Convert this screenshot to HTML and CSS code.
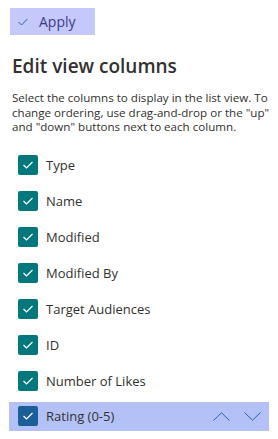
FILE: index.html
```html
<!DOCTYPE html>
<html>
<head>
<meta charset="utf-8">
<link rel="stylesheet" href="styles.css">
</head>
<body>
<div class="panel">
  <button class="apply">
    <svg class="apply-icon" width="10" height="8" viewBox="0 0 10 8"><path d="M0.5 4 L3.5 7 L9.5 0.8" fill="none" stroke="#2f5fb8" stroke-width="1"/></svg>
    <span>Apply</span>
  </button>
  <h1 class="title">Edit view columns</h1>
  <p class="desc">Select the columns to display in the list view. To change ordering, use drag-and-drop or the "up" and "down" buttons next to each column.</p>
  <ul class="cols">
    <li class="col"><span class="box"><svg width="12" height="10" viewBox="0 0 12 10"><path d="M1.5 5 L4.5 8 L10.5 2" fill="none" stroke="#fff" stroke-width="1.2"/></svg></span><span class="label">Type</span></li>
    <li class="col"><span class="box"><svg width="12" height="10" viewBox="0 0 12 10"><path d="M1.5 5 L4.5 8 L10.5 2" fill="none" stroke="#fff" stroke-width="1.2"/></svg></span><span class="label">Name</span></li>
    <li class="col"><span class="box"><svg width="12" height="10" viewBox="0 0 12 10"><path d="M1.5 5 L4.5 8 L10.5 2" fill="none" stroke="#fff" stroke-width="1.2"/></svg></span><span class="label">Modified</span></li>
    <li class="col"><span class="box"><svg width="12" height="10" viewBox="0 0 12 10"><path d="M1.5 5 L4.5 8 L10.5 2" fill="none" stroke="#fff" stroke-width="1.2"/></svg></span><span class="label">Modified By</span></li>
    <li class="col"><span class="box"><svg width="12" height="10" viewBox="0 0 12 10"><path d="M1.5 5 L4.5 8 L10.5 2" fill="none" stroke="#fff" stroke-width="1.2"/></svg></span><span class="label">Target Audiences</span></li>
    <li class="col"><span class="box"><svg width="12" height="10" viewBox="0 0 12 10"><path d="M1.5 5 L4.5 8 L10.5 2" fill="none" stroke="#fff" stroke-width="1.2"/></svg></span><span class="label">ID</span></li>
    <li class="col"><span class="box"><svg width="12" height="10" viewBox="0 0 12 10"><path d="M1.5 5 L4.5 8 L10.5 2" fill="none" stroke="#fff" stroke-width="1.2"/></svg></span><span class="label">Number of Likes</span></li>
    <li class="col col-active"><span class="box box-active"><svg width="12" height="10" viewBox="0 0 12 10"><path d="M1.5 5 L4.5 8 L10.5 2" fill="none" stroke="#fff" stroke-width="1.2"/></svg></span><span class="label">Rating (0-5)</span>
      <span class="arrows">
        <svg class="arrow" width="17" height="9" viewBox="0 0 17 9"><path d="M0.5 8.5 L8.5 0.8 L16.5 8.5" fill="none" stroke="#2f5fb8" stroke-width="1"/></svg>
        <svg class="arrow" width="17" height="9" viewBox="0 0 17 9"><path d="M0.5 0.5 L8.5 8.2 L16.5 0.5" fill="none" stroke="#2f5fb8" stroke-width="1"/></svg>
      </span>
    </li>
  </ul>
</div>
</body>
</html>
```

FILE: styles.css
```css
html, body {
  margin: 0;
  padding: 0;
  background: #fff;
}
.panel {
  width: 278px;
  height: 439px;
  overflow: hidden;
  font-family: "Segoe UI", "Open Sans", "Noto Sans", sans-serif;
  color: #323130;
}
.apply {
  display: flex;
  align-items: center;
  margin: 8px 0 0 10px;
  width: 85px;
  height: 27px;
  padding: 0 0 0 8px;
  border: none;
  background: #c4c8fb;
  font-family: inherit;
  font-size: 14px;
  color: #3d3a8c;
  box-sizing: border-box;
}
.apply-icon {
  margin-right: 11px;
}
.title {
  margin: 17px 0 0 12px;
  font-size: 19px;
  font-weight: 600;
  line-height: 28px;
  color: #323130;
}
.desc {
  margin: 11px 0 0 12px;
  width: 266px;
  font-size: 11.6px;
  line-height: 14.5px;
  color: #323130;
}
.cols {
  list-style: none;
  margin: 15px 0 0 9px;
  padding: 0;
  width: 260px;
}
.col {
  display: flex;
  align-items: center;
  height: 30px;
  margin-bottom: 6px;
  padding: 0 0 0 9px;
  box-sizing: border-box;
}
.col-active {
  background: #b4c1f6;
  height: 29px;
}
.box {
  width: 20px;
  height: 20px;
  border-radius: 2px;
  background: #03787c;
  display: flex;
  align-items: center;
  justify-content: center;
  margin-right: 8px;
  flex: none;
}
.box-active {
  background: #1a5f98;
}
.label {
  font-size: 13px;
  color: #323130;
}
.arrows {
  margin-left: auto;
  display: flex;
  gap: 14px;
  margin-right: 8px;
}
.arrow {
  display: block;
}
```
